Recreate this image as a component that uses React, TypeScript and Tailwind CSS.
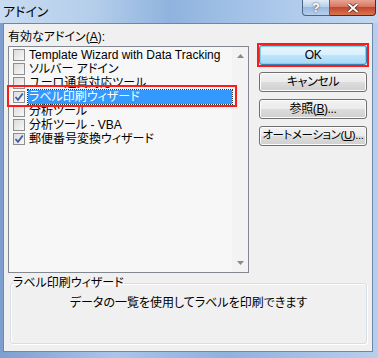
import { memo } from 'react';

const font = "font-['Liberation_Sans','Noto_Sans_CJK_JP',sans-serif] [font-feature-settings:'palt']";

const CheckBox = memo<{ checked?: boolean }>(({ checked }) => (
  <div className="w-[12px] h-[12px] border border-[#8e8f8f] bg-[linear-gradient(135deg,#dcdcdc,#f8f8f8)] shrink-0 flex items-center justify-center">
    {checked && (
      <svg width="10" height="10" viewBox="0 0 10 10">
        <path d="M1.5 5 L4 7.8 L8.8 1.5" fill="none" stroke="#3e5aa8" strokeWidth="1.8" />
      </svg>
    )}
  </div>
));
CheckBox.displayName = 'CheckBox';

const items = [
  { label: 'Template Wizard with Data Tracking', checked: false },
  { label: 'ソルバー アドイン', checked: false },
  { label: 'ユーロ通貨対応ツール', checked: false },
  { label: 'ラベル印刷ウィザード', checked: true, selected: true },
  { label: '分析ツール', checked: false },
  { label: '分析ツール - VBA', checked: false },
  { label: '郵便番号変換ウィザード', checked: true },
];

const Button = memo<{ children: React.ReactNode; isDefault?: boolean }>(({ children, isDefault }) => (
  <div
    className={
      'h-[20px] w-full rounded-[3px] border flex items-center justify-center whitespace-nowrap text-[12px] tracking-[-0.4px] text-black ' +
      (isDefault
        ? 'border-[#3c7fb1] bg-[linear-gradient(#eaf6fd_0%,#d9f0fc_50%,#bee6fd_50%,#a7d9f5_100%)] shadow-[inset_0_0_0_1px_#78d4f6]'
        : 'border-[#707070] bg-[linear-gradient(#f2f2f2_0%,#ebebeb_50%,#dddddd_50%,#cfcfcf_100%)] shadow-[inset_0_0_0_1px_#fcfcfc]')
    }
  >
    {children}
  </div>
));
Button.displayName = 'Button';

export default function App() {
  return (
    <div className={`w-[378px] h-[358px] bg-[linear-gradient(90deg,#7d9fd0,#a9c5ea_30%,#8fb2de_60%,#b7cfee)] flex flex-col ${font}`}>
      {/* title bar */}
      <div className="h-[23px] flex items-start shrink-0 bg-[linear-gradient(90deg,#c9dcf1_0%,#b4cdea_25%,#8fb3de_45%,#a9c6e9_70%,#c3d8f0_100%)]">
        <span className="ml-[3px] mt-[4px] text-[13px] leading-[15px] text-black">アドイン</span>
        <div className="ml-auto mr-[2px] flex">
          <div className="w-[28px] h-[16px] rounded-bl-[4px] border border-t-0 border-[#4d6484] bg-[linear-gradient(#e0ebf7,#b5cde9_50%,#9ab9df_50%,#b6cfec)] flex items-center justify-center text-[12px] font-bold text-white [text-shadow:0_0_2px_#334]">
            ?
          </div>
          <div className="w-[46px] h-[16px] rounded-br-[4px] border border-t-0 border-l-0 border-[#4d2a2a] bg-[linear-gradient(#e8a493,#d4725c_50%,#c5452e_50%,#d8764f)] flex items-center justify-center">
            <svg width="12" height="10" viewBox="0 0 12 10">
              <path d="M1.5 1 L10.5 9 M10.5 1 L1.5 9" stroke="#3a1a1a" strokeWidth="3.2" />
              <path d="M1.5 1 L10.5 9 M10.5 1 L1.5 9" stroke="#ffffff" strokeWidth="2" />
            </svg>
          </div>
        </div>
      </div>

      {/* client area */}
      <div className="flex-1 ml-[3px] mr-[5px] mb-[6px] bg-[#f0f0f0] border border-[#6f86a6] flex flex-col">
        <div className="flex pl-[4px]">
          <div className="flex flex-col w-[241px]">
            <div className="mt-[6px] h-[14px] leading-[14px] text-[12px] text-black">
              有効なアドイン(<span className="underline">A</span>):
            </div>
            <div className="mt-[2px] h-[227px] border border-[#828790] bg-[#f7f7f7] flex">
              <div className="flex-1 flex flex-col pt-[1px] relative">
                {items.map((item) => (
                  <div key={item.label} className="h-[14px] flex items-center pl-[4px]">
                    <CheckBox checked={item.checked} />
                    <div
                      className={
                        'ml-[3px] h-[14px] flex items-center text-[12px] leading-[14px] whitespace-nowrap flex-1 pl-[1px] ' +
                        (item.selected ? 'bg-[#3399ff] text-white outline-1 outline-dotted outline-[#333]' : 'text-black')
                      }
                    >
                      {item.label}
                    </div>
                  </div>
                ))}
                <div className="absolute left-[-2px] right-[-5px] top-[38px] h-[22px] border-2 border-[#ff1a1a]" />
              </div>
              <div className="w-[16px] bg-[#f3f3f3] flex flex-col items-center justify-between py-[7px]">
                <svg width="7" height="4" viewBox="0 0 7 4"><path d="M0 4 L3.5 0 L7 4 Z" fill="#8a8a8a" /></svg>
                <svg width="7" height="4" viewBox="0 0 7 4"><path d="M0 0 L3.5 4 L7 0 Z" fill="#8a8a8a" /></svg>
              </div>
            </div>
          </div>
          <div className="ml-[10px] mt-[21px] w-[108px] flex flex-col gap-[7px]">
            <div className="relative">
              <Button isDefault>OK</Button>
              <div className="absolute -left-[2px] -right-[2px] -top-[2px] -bottom-[2px] border-2 border-[#ff1a1a]" />
            </div>
            <Button>キャンセル</Button>
            <Button>
              参照(<span className="underline">B</span>)...
            </Button>
            <Button>
              <span className="text-[11.5px]">オートメーション(<span className="underline">U</span>)...</span>
            </Button>
          </div>
        </div>

        <fieldset className="mt-[3px] ml-[6px] mr-[5px] h-[68px] border border-[#d5dfe5] rounded-[3px] shadow-[inset_1px_1px_0_#ffffff,1px_1px_0_#ffffff]">
          <legend className="ml-[2px] px-0 text-[12px] leading-[14px] text-black">ラベル印刷ウィザード</legend>
          <div className="mt-[6px] text-center text-[12px] leading-[14px] text-black">
            データの一覧を使用してラベルを印刷できます
          </div>
        </fieldset>
      </div>
    </div>
  );
}
